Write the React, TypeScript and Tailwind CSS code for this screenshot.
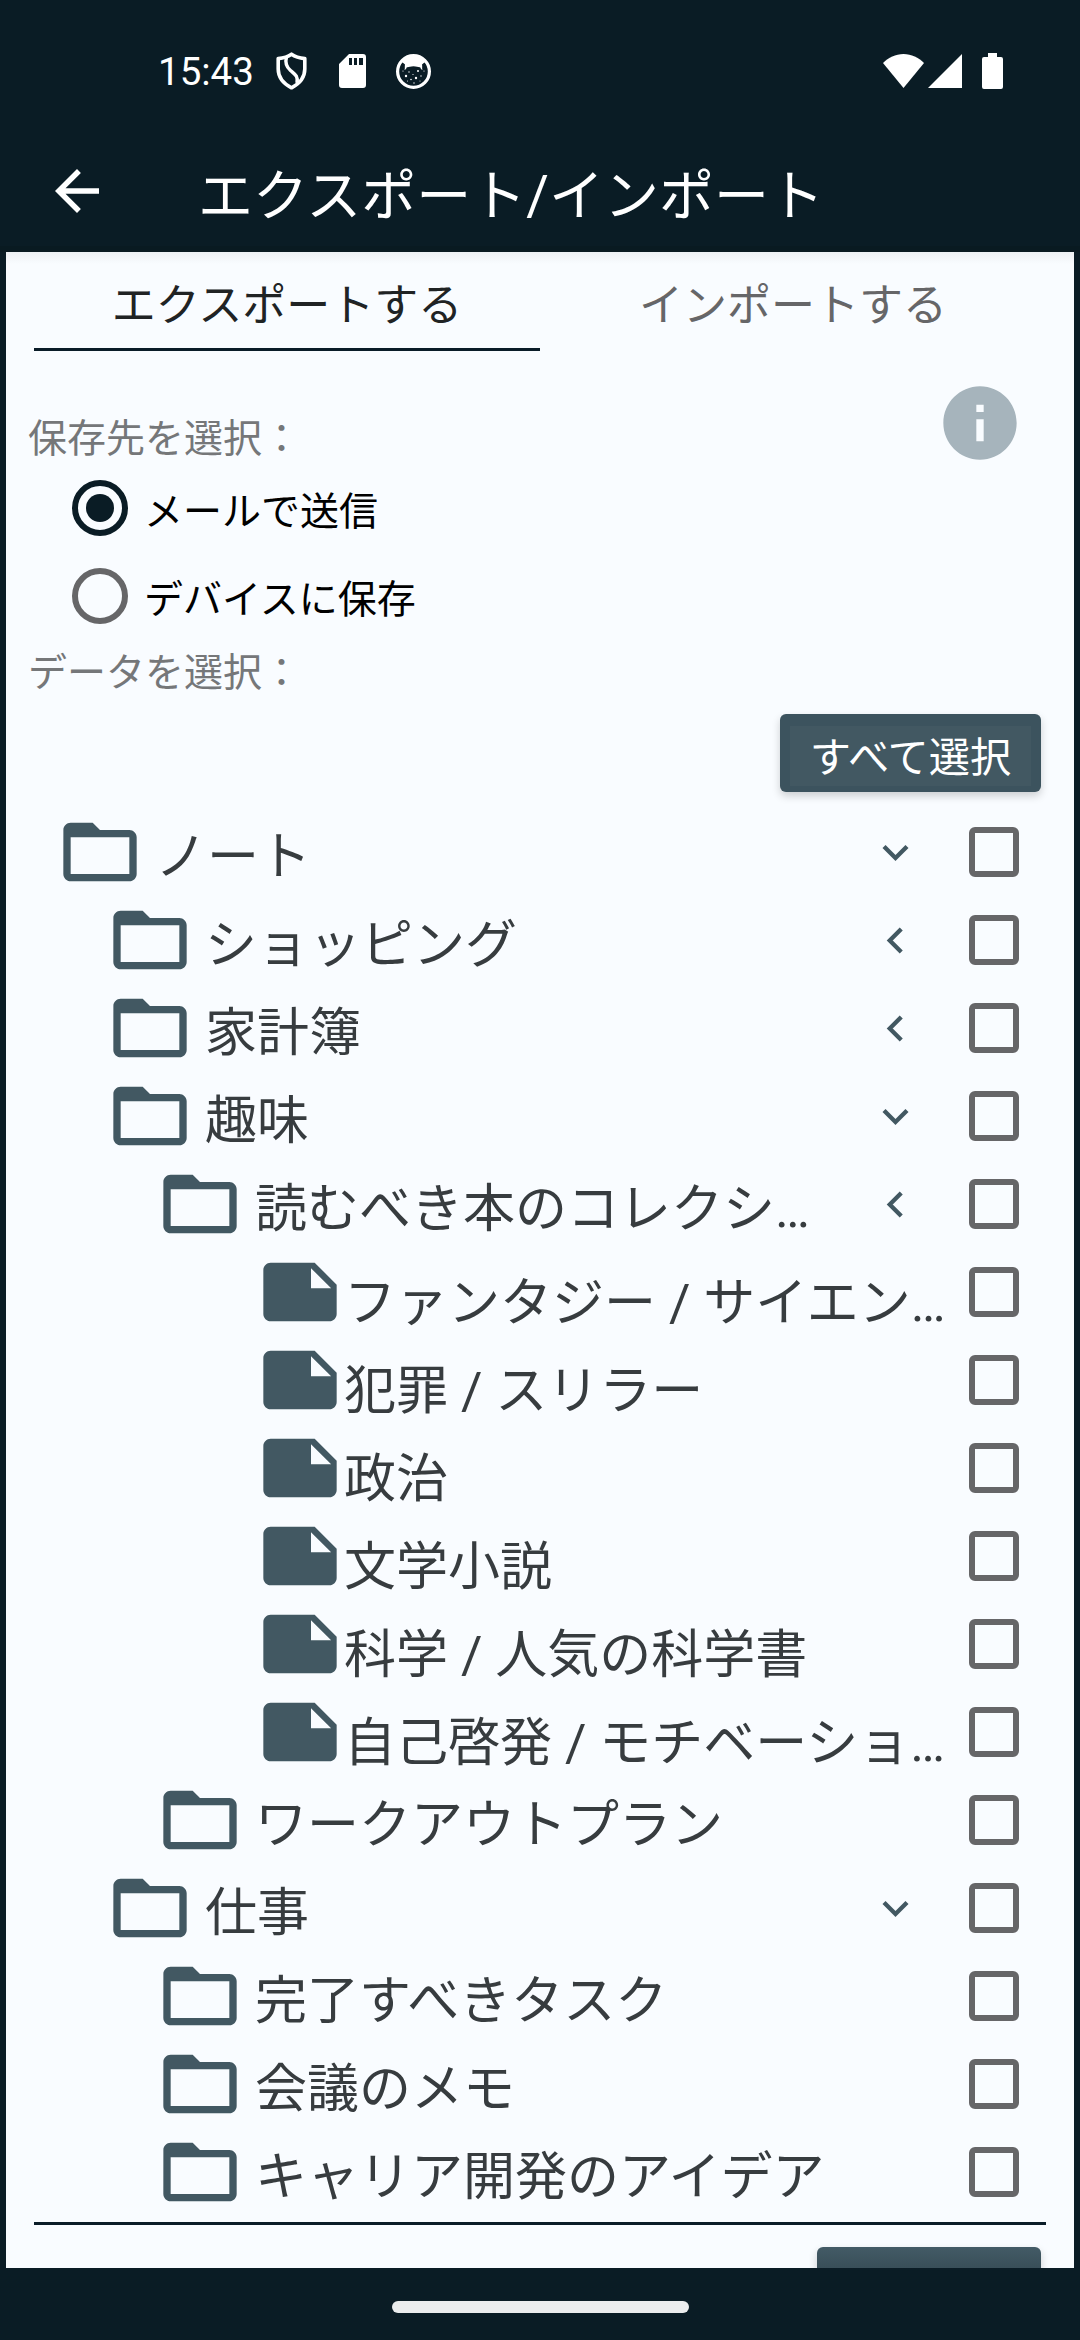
import clsx from "clsx";

type TreeItem = {
  label: string;
  depth: number;
  kind: "folder" | "note";
  open?: boolean;
};

const items: TreeItem[] = [
  { label: "ノート", depth: 0, kind: "folder", open: true },
  { label: "ショッピング", depth: 1, kind: "folder", open: false },
  { label: "家計簿", depth: 1, kind: "folder", open: false },
  { label: "趣味", depth: 1, kind: "folder", open: true },
  { label: "読むべき本のコレクシ…", depth: 2, kind: "folder", open: false },
  { label: "ファンタジー / サイエン…", depth: 4, kind: "note" },
  { label: "犯罪 / スリラー", depth: 4, kind: "note" },
  { label: "政治", depth: 4, kind: "note" },
  { label: "文学小説", depth: 4, kind: "note" },
  { label: "科学 / 人気の科学書", depth: 4, kind: "note" },
  { label: "自己啓発 / モチベーショ…", depth: 4, kind: "note" },
  { label: "ワークアウトプラン", depth: 2, kind: "folder" },
  { label: "仕事", depth: 1, kind: "folder", open: true },
  { label: "完了すべきタスク", depth: 2, kind: "folder" },
  { label: "会議のメモ", depth: 2, kind: "folder" },
  { label: "キャリア開発のアイデア", depth: 2, kind: "folder" },
];

const indent: Record<number, string> = {
  0: "pl-[50px]",
  1: "pl-[100px]",
  2: "pl-[150px]",
  4: "pl-[250px]",
};

const paths = {
  back: "M20 11H7.83l5.59-5.59L12 4l-8 8 8 8 1.41-1.41L7.83 13H20v-2z",
  info: "M12 2C6.48 2 2 6.48 2 12s4.48 10 10 10 10-4.48 10-10S17.52 2 12 2zm1 15h-2v-6h2v6zm0-8h-2V7h2v2z",
  folder:
    "M20 6h-8l-2-2H4c-1.1 0-1.99.9-1.99 2L2 18c0 1.1.9 2 2 2h16c1.1 0 2-.9 2-2V8c0-1.1-.9-2-2-2zm0 12H4V8h16v10z",
  note: "M22 10l-6-6H4c-1.1 0-2 .9-2 2v12.01c0 1.1.9 1.99 2 1.99l16-.01c1.1 0 2-.89 2-1.99v-8zm-7-4.5l5.5 5.5H15V5.5z",
};

function Icon({ d, className }: { d: string; className: string }) {
  return (
    <svg viewBox="0 0 24 24" fill="currentColor" className={clsx("shrink-0", className)}>
      <path d={d} />
    </svg>
  );
}

function Chevron({ open }: { open: boolean }) {
  return (
    <svg
      viewBox="0 0 24 24"
      fill="none"
      stroke="currentColor"
      strokeWidth="1.95"
      className="mr-[47px] size-[53px] shrink-0 text-[#425862]"
    >
      <path d={open ? "M6.8 9.3l5.2 5.2 5.2-5.2" : "M14.6 6.8L9.4 12l5.2 5.2"} />
    </svg>
  );
}

function StatusBar() {
  return (
    <div className="flex h-[142px] items-center pl-[158px] pr-[77px] text-white">
      <span className="w-[118px] pt-[2px] text-[38.5px] leading-none">15:43</span>
      <svg viewBox="0 0 31 38" className="h-[38px] w-[31px]" fill="none" stroke="white">
        <path
          d="M15.5 2.2C12 4.6 7.5 6 2.2 6.6V17c0 8.5 5 14.5 13.3 18.8C23.8 31.5 28.8 25.5 28.8 17V6.6C23.5 6 19 4.6 15.5 2.2z"
          strokeWidth="3.6"
          strokeLinejoin="round"
        />
        <path d="M10.5 5C8.8 11 10.5 15 14.5 18.5S22.5 24 21 31" strokeWidth="3.4" />
      </svg>
      <svg viewBox="0 0 27 34" className="ml-8 h-[34px] w-[27px]" fill="white">
        <path
          fillRule="evenodd"
          d="M10 0h14a3 3 0 0 1 3 3v28a3 3 0 0 1-3 3H3a3 3 0 0 1-3-3V10zM10 4v7h3V4zm5 0v7h3V4zm5 0v7h4V4z"
        />
      </svg>
      <svg viewBox="0 0 35 35" className="ml-[30px] size-[35px]" fill="white">
        <circle cx="17.5" cy="17.5" r="15.9" fill="none" stroke="white" strokeWidth="3.2" />
        <path d="M6 8C9 4 13 2 17.5 2S26 4 29 8l-3 2.5c.5 2-.2 4 .5 5.5-1.5-.7-2-1.5-2.3-2.7-2.2.2-3.4-1-6.7-1s-4.5 1.2-6.700 1C10.5 14.5 10 15.3 8.500 16c.7-1.500 0-3.500.5-5.500z" />
        <circle cx="22" cy="17" r="1" />
        <circle cx="10" cy="22" r="1.2" />
        <circle cx="20" cy="24" r="1.2" />
        <circle cx="13" cy="18" r=".7" />
        <circle cx="17" cy="20.5" r=".6" />
        <circle cx="25" cy="22" r=".7" />
        <circle cx="28" cy="17" r=".6" />
        <circle cx="7" cy="17" r=".6" />
        <circle cx="15" cy="25.5" r=".8" />
        <circle cx="18" cy="29" r=".7" />
        <circle cx="11.5" cy="27" r=".5" />
        <circle cx="24" cy="27" r=".5" />
      </svg>
      <div className="ml-auto flex items-center">
        <svg viewBox="0 0 41 34" className="h-[34px] w-[41px]" fill="white">
          <path d="M20.5 34L0 9C5.5 3.5 12.5 0 20.5 0S35.5 3.5 41 9z" />
        </svg>
        <svg viewBox="0 0 34 34" className="ml-1 size-[34px]" fill="white">
          <path d="M34 0v34H0z" />
        </svg>
        <svg viewBox="0 0 21 36" className="ml-5 h-9 w-[21px]" fill="white">
          <path d="M6 0h9v4h4a2 2 0 0 1 2 2v28a2 2 0 0 1-2 2H2a2 2 0 0 1-2-2V6a2 2 0 0 1 2-2h4z" />
        </svg>
      </div>
    </div>
  );
}

function RadioRow({ label, checked }: { label: string; checked?: boolean }) {
  return (
    <div className="flex h-[88px] shrink-0 items-center pl-[66px]">
      <div
        className={clsx(
          "flex size-14 items-center justify-center rounded-full border-[6px]",
          checked ? "border-[#0a1c25]" : "border-[#666668]"
        )}
      >
        {checked && <div className="size-7 rounded-full bg-[#0a1c25]" />}
      </div>
      <span className="ml-4 pt-[9px] text-[39px] leading-none text-black">{label}</span>
    </div>
  );
}

function TreeRow({ item }: { item: TreeItem }) {
  const isNote = item.kind === "note";
  return (
    <div className={clsx("flex h-[88px] items-center pr-[55px]", indent[item.depth])}>
      <Icon d={isNote ? paths.note : paths.folder} className="size-[88px] text-[#425862]" />
      <span
        className={clsx(
          "flex-1 whitespace-nowrap text-[52px] leading-none text-[#373c3f]",
          isNote ? "pt-6" : "pl-[11px] pt-3"
        )}
      >
        {item.label}
      </span>
      {item.open !== undefined && <Chevron open={item.open} />}
      <div className="size-[50px] shrink-0 rounded-[6px] border-[6px] border-[#666668]" />
    </div>
  );
}

export default function App() {
  return (
    <div className="flex h-[2340px] w-[1080px] flex-col overflow-hidden bg-[#0a1c25] font-[Roboto,'Noto_Sans_CJK_JP',sans-serif]">
      <StatusBar />
      <header className="flex h-[110px] items-center border-b-[6px] border-[#091a21] pl-11 text-white">
        <Icon d={paths.back} className="mb-[6px] size-[66px]" />
        <h1 className="ml-[88px] pt-1 text-[55px] leading-none">エクスポート/インポート</h1>
      </header>

      <main className="mx-[6px] flex h-[2016px] flex-col overflow-hidden bg-[#f9fcff]">
        <div className="h-3 shrink-0 bg-linear-to-b from-[#edf1f4] to-[#f9fcff]" />
        <div className="mx-7 grid h-[87px] shrink-0 grid-cols-2 text-center text-[44px] leading-[84px]">
          <div className="border-b-[3px] border-[#0a1c28] text-[#202324]">エクスポートする</div>
          <div className="text-[#666668]">インポートする</div>
        </div>

        <div className="flex h-[113px] shrink-0 items-start justify-between pl-[22px] pr-[50px] pt-7">
          <span className="pt-[41px] text-[39px] leading-none text-[#757779]">保存先を選択：</span>
          <Icon d={paths.info} className="size-[88px] text-[#a6b4bc]" />
        </div>
        <RadioRow label="メールで送信" checked />
        <RadioRow label="デバイスに保存" />
        <div className="flex h-[74px] shrink-0 items-start pl-[22px] pt-[14px] text-[39px] leading-none text-[#757779]">
          データを選択：
        </div>
        <div className="flex h-[94px] shrink-0 items-start justify-end pr-[33px]">
          <button className="h-[78px] w-[261px] rounded-[6px] bg-[#3c535e] px-[10px] pb-[6px] pt-3 shadow-[0_4px_8px_rgba(0,0,0,0.18)]">
            <span className="flex h-full items-center justify-center whitespace-nowrap bg-[#425862] pt-[6px] text-[41.25px] leading-none text-white">
              すべて選択
            </span>
          </button>
        </div>

        <div className="shrink-0">
          {items.map((item) => (
            <TreeRow key={item.label} item={item} />
          ))}
        </div>
        <div className="mx-7 mt-[6px] h-[3px] shrink-0 bg-[#0a1c28]" />
        <div className="mt-[22px] flex shrink-0 justify-end pr-[33px]">
          <div className="h-[78px] w-[224px] rounded-[6px] bg-linear-to-b from-[#435b66] to-[#384d57] to-30% shadow-[0_4px_8px_rgba(0,0,0,0.18)]" />
        </div>
      </main>

      <div className="flex h-[72px] items-center justify-center pt-[6px]">
        <div className="h-3 w-[297px] rounded-full bg-[#ebedee]" />
      </div>
    </div>
  );
}
